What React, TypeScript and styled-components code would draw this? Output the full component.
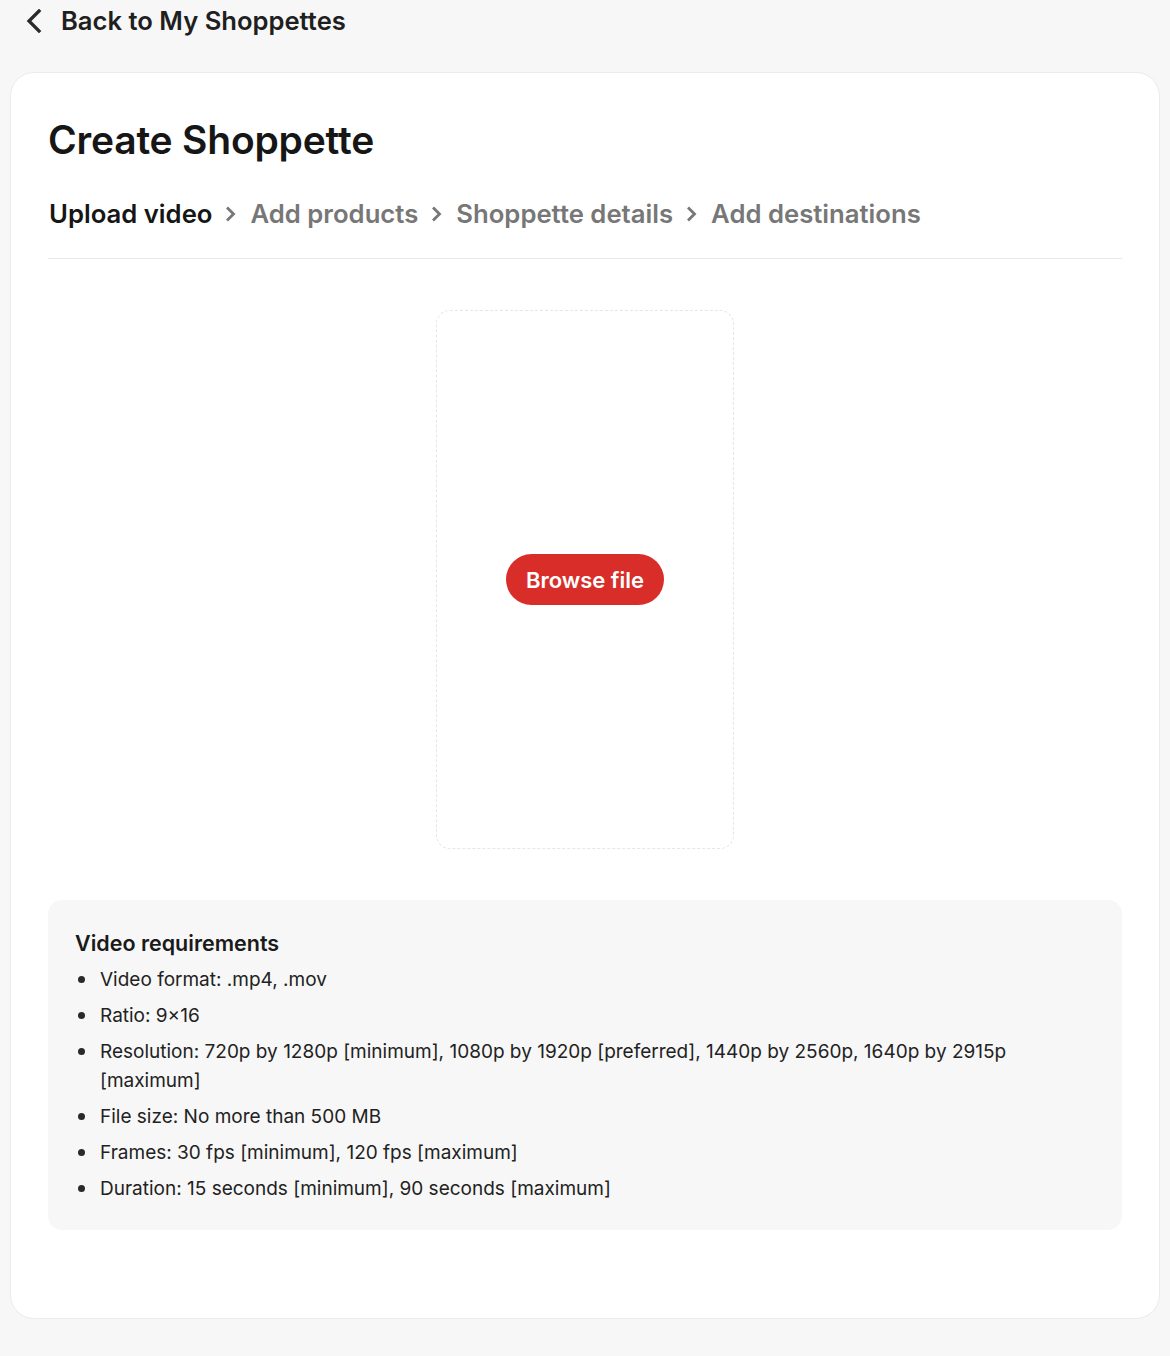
import React from "react";
import styled, { createGlobalStyle } from "styled-components";

const GlobalStyle = createGlobalStyle`
  * { box-sizing: border-box; }
  html, body {
    margin: 0;
    padding: 0;
    background: #f7f7f7;
    font-family: Inter, "Noto Sans", "Liberation Sans", sans-serif;
    color: #1a1a1a;
  }
`;

const Page = styled.div`
  min-height: 1356px;
  padding: 0 10px 38px;
  display: flex;
  flex-direction: column;
`;

const BackLink = styled.a`
  height: 72px;
  display: flex;
  align-items: flex-start;
  gap: 19px;
  padding: 5px 0 0 14px;
  font-size: 25.6px;
  font-weight: 600;
  line-height: 32px;
  color: #1f1f1f;
  text-decoration: none;
  cursor: pointer;

  svg {
    margin-top: 4px;
    flex-shrink: 0;
  }
`;

const Card = styled.section`
  background: #ffffff;
  border: 1px solid #ebebeb;
  border-radius: 24px;
  padding: 43px 37px 88px;
  display: flex;
  flex-direction: column;
`;

const Title = styled.h1`
  margin: 0;
  font-size: 39px;
  font-weight: 600;
  line-height: 48px;
  color: #161616;
  letter-spacing: -0.2px;
`;

const Steps = styled.nav`
  margin-top: 34px;
  padding-bottom: 28px;
  border-bottom: 1px solid #e9e9e9;
  display: flex;
  align-items: center;
  gap: 13px;
  padding-left: 1px;
`;

const Step = styled.span<{ $active?: boolean }>`
  font-size: 25.7px;
  font-weight: 600;
  line-height: 32px;
  color: ${(p) => (p.$active ? "#161616" : "#777777")};
`;

const DropZone = styled.div`
  align-self: center;
  margin-top: 51px;
  width: 298px;
  height: 539px;
  border: 1px dashed #e6e6e6;
  border-radius: 14px;
  display: flex;
  align-items: center;
  justify-content: center;
`;

const BrowseButton = styled.button`
  width: 158px;
  height: 51px;
  border: none;
  border-radius: 26px;
  background: #d92d29;
  color: #ffffff;
  font-family: inherit;
  font-size: 22px;
  font-weight: 600;
  cursor: pointer;
`;

const Requirements = styled.div`
  margin-top: 51px;
  background: #f7f7f7;
  border-radius: 14px;
  padding: 28px 27px 27px;
`;

const ReqTitle = styled.h2`
  margin: 0 0 7px;
  font-size: 21.5px;
  font-weight: 600;
  line-height: 30px;
  color: #1a1a1a;
`;

const ReqList = styled.ul`
  margin: 0;
  padding: 0;
  list-style: none;
  display: flex;
  flex-direction: column;
  gap: 7px;
`;

const ReqItem = styled.li`
  position: relative;
  padding-left: 25px;
  font-size: 19px;
  line-height: 29px;
  color: #222222;

  &::before {
    content: "";
    position: absolute;
    left: 3px;
    top: 11px;
    width: 7px;
    height: 7px;
    border-radius: 50%;
    background: #2a2a2a;
  }
`;

const BackChevron = () => (
  <svg width="18" height="24" viewBox="0 0 18 24" fill="none" stroke="#2a2a2a" strokeWidth="3.3" strokeLinecap="square" strokeLinejoin="miter">
    <path d="M15 2 5 12l10 10" />
  </svg>
);

const StepChevron = () => (
  <svg width="12" height="16" viewBox="0 0 12 16" fill="none" stroke="#777777" strokeWidth="2.8" strokeLinecap="square" strokeLinejoin="miter">
    <path d="m3 2.5 5.5 5.5L3 13.5" />
  </svg>
);

const requirements = [
  "Video format: .mp4, .mov",
  "Ratio: 9×16",
  "Resolution: 720p by 1280p [minimum], 1080p by 1920p [preferred], 1440p by 2560p, 1640p by 2915p [maximum]",
  "File size: No more than 500 MB",
  "Frames: 30 fps [minimum], 120 fps [maximum]",
  "Duration: 15 seconds [minimum], 90 seconds [maximum]",
];

const steps = ["Upload video", "Add products", "Shoppette details", "Add destinations"];

export default function App() {
  return (
    <>
      <GlobalStyle />
      <Page>
        <BackLink>
          <BackChevron />
          Back to My Shoppettes
        </BackLink>
        <Card>
          <Title>Create Shoppette</Title>
          <Steps>
            {steps.map((s, i) => (
              <React.Fragment key={s}>
                {i > 0 && <StepChevron />}
                <Step $active={i === 0}>{s}</Step>
              </React.Fragment>
            ))}
          </Steps>
          <DropZone>
            <BrowseButton>Browse file</BrowseButton>
          </DropZone>
          <Requirements>
            <ReqTitle>Video requirements</ReqTitle>
            <ReqList>
              {requirements.map((r) => (
                <ReqItem key={r}>{r}</ReqItem>
              ))}
            </ReqList>
          </Requirements>
        </Card>
      </Page>
    </>
  );
}
